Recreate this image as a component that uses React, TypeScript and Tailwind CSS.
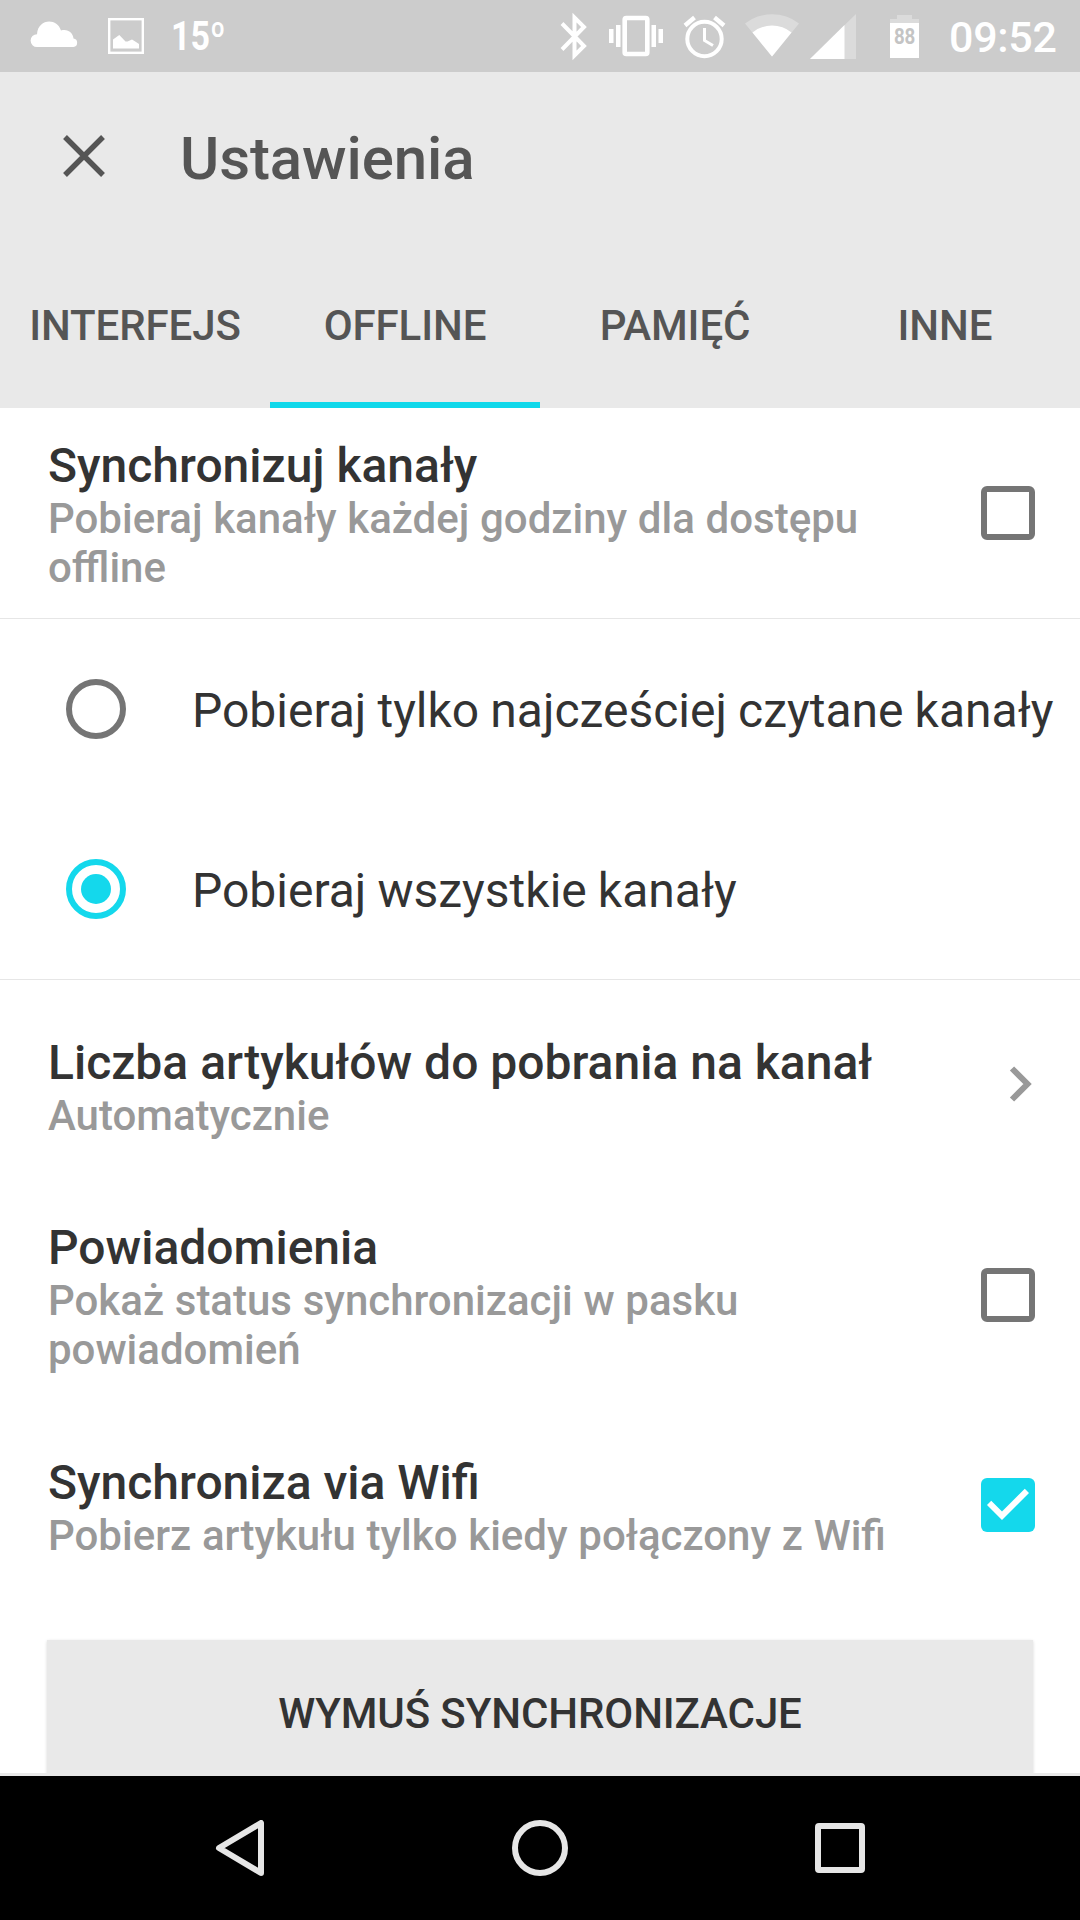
import React, { useState } from 'react';

const TABS = ['INTERFEJS', 'OFFLINE', 'PAMIĘĆ', 'INNE'];

const CHANNEL_MODES = [
  { id: 'top', label: 'Pobieraj tylko najcześciej czytane kanały' },
  { id: 'all', label: 'Pobieraj wszystkie kanały' },
];

export default function App() {
  const [tab, setTab] = useState('OFFLINE');
  const [mode, setMode] = useState('all');
  const [syncChannels, setSyncChannels] = useState(false);
  const [notifications, setNotifications] = useState(false);
  const [wifiOnly, setWifiOnly] = useState(true);

  return (
    <div className="flex h-[1920px] w-[1080px] flex-col overflow-hidden bg-white font-['Roboto',sans-serif] text-[#333333]">
      <StatusBar />

      <header className="flex h-[336px] shrink-0 flex-col bg-[#e9e9e9] text-[#555555]">
        <div className="flex h-[168px] items-center pl-[60px]">
          <button aria-label="Zamknij">
            <svg width="48" height="48" viewBox="0 0 48 48" fill="none" stroke="currentColor" strokeWidth="5.4">
              <path d="M5 5l38 38M43 5L5 43" />
            </svg>
          </button>
          <h1 className="ml-[72px] pt-[6px] text-[60px] leading-[70px] font-medium tracking-[-0.1px]">Ustawienia</h1>
        </div>
        <nav className="grid flex-1 grid-cols-4">
          {TABS.map((name) => (
            <button
              key={name}
              onClick={() => setTab(name)}
              className={`border-b-6 pt-2 text-[42px] font-medium tracking-[-0.1px] ${
                tab === name ? 'border-[#10d8ea]' : 'border-transparent'
              }`}
            >
              {name}
            </button>
          ))}
        </nav>
      </header>

      <main className="flex min-h-0 flex-1 flex-col overflow-hidden">
        <SettingRow title="Synchronizuj kanały" subtitle="Pobieraj kanały każdej godziny dla dostępu offline">
          <Checkbox checked={syncChannels} onChange={setSyncChannels} />
        </SettingRow>

        <div className="shrink-0 border-y border-[#e6e6e6]">
          {CHANNEL_MODES.map((item) => (
            <button
              key={item.id}
              onClick={() => setMode(item.id)}
              className="flex h-[180px] w-full items-center pl-[66px] text-left"
            >
              <Radio checked={mode === item.id} />
              <span className="ml-[66px] pt-[3px] text-[48px] leading-[56px] whitespace-nowrap [word-spacing:-0.8px]">
                {item.label}
              </span>
            </button>
          ))}
        </div>

        <SettingRow title="Liczba artykułów do pobrania na kanał" subtitle="Automatycznie">
          <svg className="mr-[11px] mb-[2px]" width="24" height="36" viewBox="0 0 24 36" fill="none" stroke="#999999" strokeWidth="6">
            <path d="M3 2.5L18.5 18L3 33.5" />
          </svg>
        </SettingRow>
        <SettingRow title="Powiadomienia" subtitle="Pokaż status synchronizacji w pasku powiadomień">
          <Checkbox checked={notifications} onChange={setNotifications} />
        </SettingRow>
        <SettingRow title="Synchroniza via Wifi" subtitle="Pobierz artykułu tylko kiedy połączony z Wifi">
          <Checkbox checked={wifiOnly} onChange={setWifiOnly} />
        </SettingRow>

        <button className="mx-[47px] mt-[30px] h-[144px] shrink-0 bg-[#e9e9e9] pt-[2px] text-[42px] font-medium tracking-[-0.1px] shadow-[0_1px_3px_rgba(0,0,0,0.16)]">
          WYMUŚ SYNCHRONIZACJE
        </button>
      </main>

      <div className="h-[3px] shrink-0 bg-[#e9e9e9]" />
      <NavBar />
    </div>
  );
}

const SettingRow: React.FC<{
  title: string;
  subtitle: string;
  children: React.ReactNode;
}> = ({ title, subtitle, children }) => (
  <div className="flex h-[210px] shrink-0 items-center justify-between pr-9 pl-12">
    <div className="w-[860px] pt-1 font-medium">
      <h2 className="text-[48px] leading-[56px]">{title}</h2>
      <p className="text-[42px] leading-[49px] text-[#999999] [word-spacing:0.3px]">{subtitle}</p>
    </div>
    {children}
  </div>
);

const Checkbox: React.FC<{ checked: boolean; onChange: (value: boolean) => void }> = ({ checked, onChange }) => (
  <button role="checkbox" aria-checked={checked} onClick={() => onChange(!checked)} className="mr-[9px]">
    <svg width="54" height="54" viewBox="3 3 18 18">
      {checked ? (
        <>
          <rect x="3" y="3" width="18" height="18" rx="2" fill="#14d8ec" />
          <path d="M10 17l-5-5 1.41-1.41L10 14.17l7.59-7.59L19 8z" fill="#fff" />
        </>
      ) : (
        <rect x="4" y="4" width="16" height="16" rx="1" fill="none" stroke="#757575" strokeWidth="2" />
      )}
    </svg>
  </button>
);

const Radio: React.FC<{ checked: boolean }> = ({ checked }) => (
  <svg width="60" height="60" viewBox="0 0 60 60" className={checked ? 'text-[#14d8ec]' : 'text-[#757575]'}>
    <circle cx="30" cy="30" r="27" fill="none" stroke="currentColor" strokeWidth="6" />
    {checked && <circle cx="30" cy="30" r="15" fill="currentColor" />}
  </svg>
);

const StatusBar = () => (
  <div className="flex h-[72px] shrink-0 items-center bg-[#cccccc] text-white">
    {/* Cloud */}
    <svg className="ml-[30px]" width="48" height="72" viewBox="0 0 48 72" fill="currentColor">
      <path d="M7 47a6.4 6.4 0 0 1 0-12.800C8 18.500 27 17.500 31 30.500C38 28.500 43 33 43.500 38.500A4.300 4.300 0 0 1 43.500 47z" />
    </svg>
    {/* Picture */}
    <svg className="ml-[30px]" width="36" height="72" viewBox="0 0 36 72">
      <rect x="1.2" y="19.2" width="33.6" height="33.6" fill="none" stroke="currentColor" strokeWidth="2.4" />
      <path d="M5 48.5V39.500L11.300 35l6.200 6.500h2L24 39.500l4 2.500 3 2v4.500z" fill="currentColor" />
    </svg>
    <span className="ml-[27px] w-[60px] origin-left scale-x-[0.85] pt-[2px] text-[40px] leading-[70px] font-bold">15º</span>

    {/* Bluetooth */}
    <svg className="ml-[329px]" width="27" height="72" viewBox="0 0 27 72" fill="none" stroke="currentColor" strokeWidth="4">
      <path d="M2 23.5l22 22.500-9.500 9.500v-38l9.500 9.500L2 49.500" />
    </svg>
    {/* Vibrate */}
    <svg className="ml-[22px]" width="54" height="72" viewBox="0 0 54 72" fill="currentColor">
      <path d="M0 29h4.500v14H0zM7 25h4.500v22H7zM42.500 25H47v22h-4.500zM49.500 29H54v14h-4.500z" />
      <rect x="15.7" y="18" width="22.6" height="36" rx="1.5" fill="none" stroke="currentColor" strokeWidth="4.6" />
    </svg>
    {/* Alarm */}
    <svg className="ml-[20px]" width="43" height="72" viewBox="0 0 43 72" fill="none" stroke="currentColor" strokeWidth="4">
      <circle cx="21.5" cy="39" r="17.2" />
      <path d="M2 25.500l9.500-8M41 25.500l-9.500-8" strokeWidth="4.4" />
      <path d="M21.500 28v12.500l8.500 5" strokeWidth="3" />
    </svg>
    {/* Wifi */}
    <svg className="ml-[19px]" width="54" height="72" viewBox="0 0 54 72" fill="currentColor">
      <path d="M0 23.500a44 44 0 0 1 54 0L27 56.500z" opacity="0.3" />
      <path d="M7.500 32.500a31 31 0 0 1 39 0L27 56.500z" />
    </svg>
    {/* Signal */}
    <svg className="ml-[11px]" width="46" height="72" viewBox="0 0 46 72" fill="currentColor">
      <path d="M46 14v45H0z" opacity="0.3" />
      <path d="M34.500 25v34H0z" />
    </svg>
    {/* Battery */}
    <div className="ml-[34px] flex w-[29px] flex-col items-center">
      <div className="h-[4px] w-[15px] bg-white/30" />
      <div className="h-[4px] w-full bg-white/30" />
      <div className="flex h-[35px] w-full justify-center bg-white pt-[3px] text-[22px] leading-[22px] font-bold text-[#c4c4c4]">
        <span className="scale-x-[0.85]">88</span>
      </div>
    </div>
    <span className="ml-[30px] pt-[2px] text-[43px] leading-[70px] font-medium tracking-[-0.3px]">09:52</span>
  </div>
);

const NavBar = () => (
  <nav className="flex h-[144px] shrink-0 items-center justify-between bg-black px-[215px]">
    <svg width="49" height="56" viewBox="0 0 49 56" fill="none" stroke="#e6e6e6" strokeWidth="6" strokeLinejoin="round">
      <path d="M46 3v50L4 28z" />
    </svg>
    <svg width="56" height="56" viewBox="0 0 56 56" fill="none" stroke="#e6e6e6" strokeWidth="6">
      <circle cx="28" cy="28" r="25" />
    </svg>
    <svg width="50" height="50" viewBox="0 0 50 50" fill="none" stroke="#e6e6e6" strokeWidth="6">
      <rect x="3" y="3" width="44" height="44" rx="1" />
    </svg>
  </nav>
);
